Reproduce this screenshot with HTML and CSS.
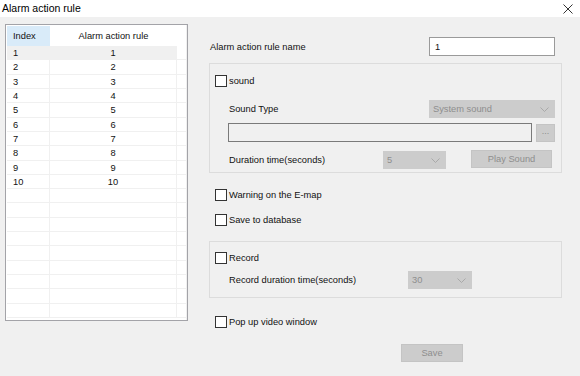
FILE: index.html
```html
<!DOCTYPE html>
<html>
<head>
<meta charset="utf-8">
<link rel="stylesheet" href="styles.css">
</head>
<body>
<div class="titlebar">
  <span class="title">Alarm action rule</span>
  <svg class="close" width="10" height="10" viewBox="0 0 10 10"><path d="M0.5 0.5 L9.5 9.5 M9.5 0.5 L0.5 9.5" stroke="#333" stroke-width="1" fill="none"/></svg>
</div>
<div class="main">
  <div class="tablewrap">
    <div class="table">
      <div class="thead">
        <div class="c1 hsel">Index</div>
        <div class="c2">Alarm action rule</div>
        <div class="c3"></div>
      </div>
      <div class="tbody">
        <div class="row sel"><div class="c1">1</div><div class="c2">1</div><div class="c3"></div></div>
        <div class="row"><div class="c1">2</div><div class="c2">2</div><div class="c3"></div></div>
        <div class="row"><div class="c1">3</div><div class="c2">3</div><div class="c3"></div></div>
        <div class="row"><div class="c1">4</div><div class="c2">4</div><div class="c3"></div></div>
        <div class="row"><div class="c1">5</div><div class="c2">5</div><div class="c3"></div></div>
        <div class="row"><div class="c1">6</div><div class="c2">6</div><div class="c3"></div></div>
        <div class="row"><div class="c1">7</div><div class="c2">7</div><div class="c3"></div></div>
        <div class="row"><div class="c1">8</div><div class="c2">8</div><div class="c3"></div></div>
        <div class="row"><div class="c1">9</div><div class="c2">9</div><div class="c3"></div></div>
        <div class="row"><div class="c1">10</div><div class="c2">10</div><div class="c3"></div></div>
        <div class="row"><div class="c1"></div><div class="c2"></div><div class="c3"></div></div>
        <div class="row"><div class="c1"></div><div class="c2"></div><div class="c3"></div></div>
        <div class="row"><div class="c1"></div><div class="c2"></div><div class="c3"></div></div>
        <div class="row"><div class="c1"></div><div class="c2"></div><div class="c3"></div></div>
        <div class="row"><div class="c1"></div><div class="c2"></div><div class="c3"></div></div>
        <div class="row"><div class="c1"></div><div class="c2"></div><div class="c3"></div></div>
        <div class="row"><div class="c1"></div><div class="c2"></div><div class="c3"></div></div>
        <div class="row"><div class="c1"></div><div class="c2"></div><div class="c3"></div></div>
        <div class="row"><div class="c1"></div><div class="c2"></div><div class="c3"></div></div>
      </div>
    </div>
  </div>

  <div class="right">
    <div class="namerow">
      <span class="lbl">Alarm action rule name</span>
      <div class="textbox name">1</div>
    </div>

    <div class="group soundgroup">
      <div class="check"><span class="box"></span><span>sound</span></div>
      <div class="sub typerow">
        <span class="lbl">Sound Type</span>
        <div class="combo wide"><span>System sound</span><svg width="9" height="5" viewBox="0 0 9 5"><path d="M0.5 0.5 L4.5 4.5 L8.5 0.5" stroke="#a9a9a9" fill="none"/></svg></div>
      </div>
      <div class="pathrow">
        <div class="textbox path"></div>
        <div class="btn dots">...</div>
      </div>
      <div class="sub durrow">
        <span class="lbl durlbl">Duration time(seconds)</span>
        <div class="combo small"><span>5</span><svg width="9" height="5" viewBox="0 0 9 5"><path d="M0.5 0.5 L4.5 4.5 L8.5 0.5" stroke="#a9a9a9" fill="none"/></svg></div>
        <div class="btn play">Play Sound</div>
      </div>
    </div>

    <div class="check solo warn"><span class="box"></span><span>Warning on the E-map</span></div>
    <div class="check solo db"><span class="box"></span><span>Save to database</span></div>

    <div class="group recgroup">
      <div class="check"><span class="box"></span><span>Record</span></div>
      <div class="sub recrow">
        <span class="lbl reclbl">Record duration time(seconds)</span>
        <div class="combo rec"><span>30</span><svg width="9" height="5" viewBox="0 0 9 5"><path d="M0.5 0.5 L4.5 4.5 L8.5 0.5" stroke="#a9a9a9" fill="none"/></svg></div>
      </div>
    </div>

    <div class="check solo pop"><span class="box"></span><span>Pop up video window</span></div>

    <div class="saverow"><div class="btn save">Save</div></div>
  </div>
</div>
</body>
</html>
```
FILE: styles.css
```css
* { box-sizing: border-box; }
html, body { margin: 0; padding: 0; }
body {
  width: 580px;
  height: 376px;
  background: #f0f0f0;
  font-family: "Liberation Sans", Arial, sans-serif;
  font-size: 9.3px;
  color: #111;
  overflow: hidden;
}
.titlebar {
  height: 17px;
  background: #ffffff;
  display: flex;
  align-items: center;
  justify-content: space-between;
  padding: 0 7px 2px 2px;
}
.title { font-size: 10.5px; color: #000; }
.close { margin-top: 2px; }

.main { display: flex; align-items: flex-start; }

.tablewrap {
  margin: 7px 0 0 5px;
  width: 183px;
  height: 297px;
  border: 1px solid #a3a3a8;
  padding: 1px 1px 1px 1px;
  background: #ffffff;
  box-shadow: inset -1px 0 0 #f0f0f0;
}
.table { width: 180px; }
.thead { display: flex; height: 20px; align-items: center; }
.thead > div { height: 20px; display: flex; align-items: center; }
.c1 { width: 43px; padding-left: 6px; }
.c2 { width: 127px; justify-content: center; text-align: center; }
.c3 { width: 10px; }
.thead .c2 { display: flex; }
.hsel { background: #d9ebf9; }
.row {
  display: flex;
  height: 14.32px;
  border-bottom: 1px solid #f0f0f0;
}
.row > div { display: flex; align-items: center; padding-top: 1px; }
.row .c1 { border-right: 1px solid #f0f0f0; }
.row .c2 { border-right: 1px solid #f0f0f0; }
.row.sel .c1, .row.sel .c2 { background: #f0f0f0; }

.right {
  margin-left: 21px;
  width: 353px;
  padding-top: 20px;
  display: flex;
  flex-direction: column;
}
.namerow {
  width: 346px;
  height: 19px;
  display: flex;
  align-items: center;
  justify-content: space-between;
  padding-left: 1px;
}
.textbox {
  border: 1px solid #8a8a8a;
  height: 19px;
  display: flex;
  align-items: center;
  padding-left: 5px;
}
.textbox.name { width: 126px; background: #fff; border-color: #9a9a9a; }

.group {
  border: 1px solid #dcdcdc;
  width: 353px;
}
.soundgroup { margin-top: 7px; height: 110px; padding: 10px 6px 0 5px; }
.check { display: flex; align-items: center; height: 13px; }
.box {
  width: 12px;
  height: 12px;
  border: 1px solid #333;
  background: #fff;
  margin-right: 2px;
}
.sub { display: flex; align-items: center; padding-left: 14px; }
.typerow { margin-top: 13px; justify-content: space-between; }
.combo {
  height: 18px;
  background: #cccccc;
  border: 1px solid #cccccc;
  color: #8e8e8e;
  display: flex;
  align-items: center;
  justify-content: space-between;
  padding: 0 5px 0 3px;
}
.combo.wide { width: 126px; }
.pathrow { display: flex; margin-top: 5px; padding-left: 13px; align-items: center; }
.textbox.path { width: 304px; background: #f0f0f0; border-color: #7a7a7a; }
.btn {
  background: #cccccc;
  border: 1px solid #c4c4c4;
  color: #8e8e8e;
  display: flex;
  align-items: center;
  justify-content: center;
}
.dots { width: 19px; height: 18px; margin-left: 4px; font-size: 9px; padding-bottom: 3px; }
.durrow { margin-top: 9px; }
.durlbl { width: 154px; }
.combo.small { width: 63px; }
.play { width: 81px; height: 18px; margin-left: 25px; margin-top: -2px; }

.solo { margin-left: 6px; }
.warn { margin-top: 15px; }
.db { margin-top: 12px; }

.recgroup { margin-top: 15px; height: 57px; padding: 9px 6px 0 5px; }
.recrow { margin-top: 7px; }
.reclbl { width: 179px; }
.combo.rec { width: 64px; }

.pop { margin-top: 17px; }
.saverow { display: flex; padding-left: 192px; margin-top: 16px; }
.save { width: 62px; height: 18px; }
```
